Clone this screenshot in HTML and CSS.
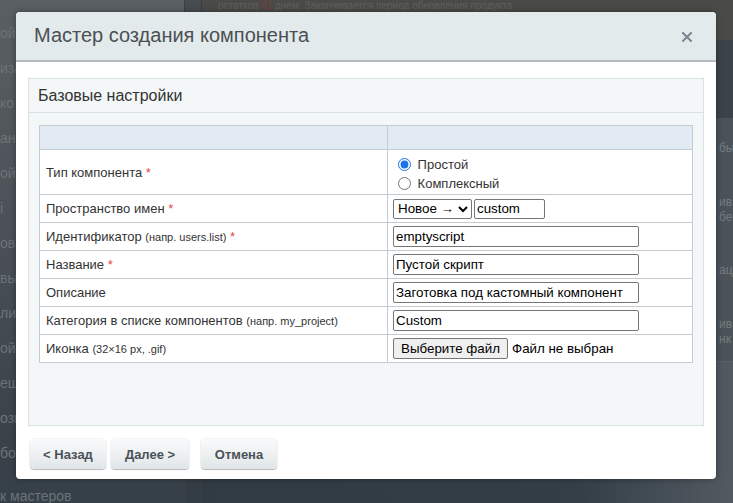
FILE: index.html
```html
<!DOCTYPE html>
<html lang="ru">
<head>
<meta charset="utf-8">
<title>Мастер создания компонента</title>
<link rel="stylesheet" href="styles.css">
</head>
<body>
<div class="page">
  <aside class="sidebar">
    <div class="nav-item">ой</div>
    <div class="nav-item">иза</div>
    <div class="nav-item">ко Т</div>
    <div class="nav-item">анны</div>
    <div class="nav-item">ой</div>
    <div class="nav-item">і</div>
    <div class="nav-item">овы</div>
    <div class="nav-item">вы</div>
    <div class="nav-item">ли</div>
    <div class="nav-item">ой</div>
    <div class="nav-item">еш</div>
    <div class="nav-item">ози</div>
    <div class="nav-item">бот</div>
    <div class="nav-item last">к мастеров</div>
  </aside>
  <div class="divider"></div>
  <main class="main">
    <div class="topbar">
      <p class="topline">остатков <span class="red">61</span> днем. Заканчивается период обновления продукта</p>
    </div>
    <div class="toolbar"></div>
    <div class="grid">
      <div class="grid-row">бы</div>
      <div class="grid-row">ив<br>бе</div>
      <div class="grid-row">ац</div>
      <div class="grid-row">ив<br>нк</div>
    </div>
    <div class="bottom"></div>
  </main>
</div>

<div class="dialog">
  <div class="dialog-head">
    <span class="dialog-title">Мастер создания компонента</span>
    <span class="close">
      <svg width="10" height="10" viewBox="0 0 10 10"><path d="M1 1 L9 9 M9 1 L1 9" stroke="#7b8790" stroke-width="2" stroke-linecap="square" fill="none"/></svg>
    </span>
  </div>
  <div class="dialog-body">
    <div class="panel">
      <div class="panel-title">Базовые настройки</div>
      <div class="panel-content">
        <table class="form">
          <tr class="head-row"><td class="col-label"></td><td></td></tr>
          <tr class="tall-row">
            <td class="col-label">Тип компонента <span class="req">*</span></td>
            <td class="radio-cell">
              <label class="radio"><input type="radio" name="type" checked> Простой</label>
              <label class="radio"><input type="radio" name="type"> Комплексный</label>
            </td>
          </tr>
          <tr>
            <td class="col-label">Пространство имен <span class="req">*</span></td>
            <td class="ns-cell">
              <select class="ns-select"><option>Новое →</option></select><input class="text small-input" type="text" value="custom">
            </td>
          </tr>
          <tr>
            <td class="col-label">Идентификатор <span class="hint">(напр. users.list)</span> <span class="req">*</span></td>
            <td><input class="text" type="text" value="emptyscript"></td>
          </tr>
          <tr>
            <td class="col-label">Название <span class="req">*</span></td>
            <td><input class="text" type="text" value="Пустой скрипт"></td>
          </tr>
          <tr>
            <td class="col-label">Описание</td>
            <td><input class="text" type="text" value="Заготовка под кастомный компонент"></td>
          </tr>
          <tr>
            <td class="col-label">Категория в списке компонентов <span class="hint">(напр. my_project)</span></td>
            <td><input class="text" type="text" value="Custom"></td>
          </tr>
          <tr>
            <td class="col-label">Иконка <span class="hint">(32×16 px, .gif)</span></td>
            <td><span class="file"><button class="file-btn" type="button">Выберите файл</button><span class="file-name">Файл не выбран</span></span></td>
          </tr>
        </table>
      </div>
    </div>
    <div class="buttons">
      <button class="btn btn-back" type="button">&lt; Назад</button>
      <button class="btn btn-next" type="button">Далее &gt;</button>
      <button class="btn btn-cancel" type="button">Отмена</button>
    </div>
  </div>
</div>
</body>
</html>
```

FILE: styles.css
```css
* { box-sizing: border-box; }

html, body {
  margin: 0;
  padding: 0;
}

body {
  width: 733px;
  height: 503px;
  overflow: hidden;
  position: relative;
  font-family: "Liberation Sans", Arial, sans-serif;
  background: #3c454c;
}

/* ---------- dimmed background page ---------- */
.page {
  display: flex;
  height: 503px;
}

.sidebar {
  width: 184px;
  flex: none;
  padding-top: 16px;
  background: linear-gradient(to bottom, #5a5f63 0%, #4b5157 45%, #3b434a 85%, #364048 100%);
  color: #6c7378;
  font-size: 14px;
}

.nav-item {
  height: 35px;
  line-height: 35px;
  white-space: nowrap;
  overflow: hidden;
}

.nav-item.last {
  margin-top: 8px;
}

.divider {
  width: 18px;
  flex: none;
  background: linear-gradient(to bottom, #474c50, #343d44);
  border-left: 1px solid #3a4045;
  border-right: 1px solid #3a4045;
}

.main {
  flex: 1;
  display: flex;
  flex-direction: column;
  min-width: 0;
}

.topbar {
  height: 40px;
  background: #4a4b49;
  padding: 0 0 0 16px;
  overflow: hidden;
}

.topline {
  margin: 0;
  font-size: 10px;
  line-height: 11px;
  color: #5f605d;
  white-space: nowrap;
}

.topline .red { color: #7a3c35; }

.toolbar {
  height: 78px;
  background: #3b4349;
}

.grid {
  height: 244px;
  background: #4b5359;
  border-bottom: 1px solid #5a6268;
}

.grid-row {
  height: 61px;
  display: flex;
  flex-direction: column;
  justify-content: center;
  padding-left: 517px;
  font-size: 12px;
  line-height: 15px;
  color: #737b80;
  white-space: nowrap;
  overflow: hidden;
}

.bottom {
  flex: 1;
  background: linear-gradient(to right, #313b43 0%, #333e47 70%, #525a61 100%);
}

/* ---------- dialog ---------- */
.dialog {
  position: absolute;
  left: 16px;
  top: 12px;
  width: 700px;
  height: 467px;
  background: #fff;
  border-radius: 4px;
  box-shadow: 0 0 6px rgba(0, 0, 0, 0.35);
  display: flex;
  flex-direction: column;
  overflow: hidden;
}

.dialog-head {
  height: 50px;
  flex: none;
  background: #e3eaec;
  border-bottom: 2px solid #b5bcbf;
  display: flex;
  align-items: center;
  justify-content: space-between;
  padding: 0 24px 2px 18px;
}

.dialog-title {
  font-size: 20px;
  color: #4b5053;
}

.close {
  display: flex;
  width: 10px;
  height: 10px;
  margin-top: 4px;
}

.dialog-body {
  flex: 1;
  display: flex;
  flex-direction: column;
  padding: 16px 12px 10px 12px;
}

.panel {
  flex: 1;
  background: #f4f7f8;
  border: 1px solid #dae1e4;
  display: flex;
  flex-direction: column;
}

.panel-title {
  height: 34px;
  flex: none;
  border-bottom: 1px solid #dae1e4;
  padding: 0 9px;
  display: flex;
  align-items: center;
  font-size: 16px;
  color: #333;
}

.panel-content {
  padding: 12px 10px;
}

/* ---------- form table ---------- */
.form {
  width: 654px;
  border-collapse: collapse;
  font-size: 13px;
  color: #333;
  background: #fff;
}

.form td {
  border: 1px solid #c3ccd2;
  height: 28px;
  padding: 0 5px;
  vertical-align: middle;
}

.form td.col-label {
  width: 348px;
  padding-left: 6px;
}

.head-row td {
  height: 24px;
  background: #e2eaf3;
}

.tall-row td {
  height: 45px;
}

.form td.radio-cell {
  padding-top: 4px;
}

.req {
  color: #e04a4a;
}

.hint {
  font-size: 11px;
}

.radio {
  display: flex;
  align-items: center;
  height: 19px;
  white-space: pre;
}

.radio input {
  width: 13px;
  height: 13px;
  margin: 0 3px 0 5px;
  accent-color: #1a73e8;
}

.ns-cell {
  white-space: nowrap;
}

.text {
  width: 246px;
  height: 21px;
  border: 1px solid #767676;
  border-radius: 2px;
  padding: 1px 2px;
  font: 13.33px "Liberation Sans", Arial, sans-serif;
  color: #000;
  background: #fff;
  vertical-align: middle;
}

.ns-select {
  width: 79px;
  height: 20px;
  border: 1px solid #767676;
  border-radius: 2px;
  font: 13.33px "Liberation Sans", Arial, sans-serif;
  color: #000;
  background: #fff;
  vertical-align: middle;
  margin: 0 2px 0 0;
  padding: 0;
}

.text.small-input {
  width: 71px;
  height: 20px;
}

.file {
  display: flex;
  align-items: center;
}

.file-btn {
  width: 115px;
  height: 21px;
  border: 1px solid #767676;
  border-radius: 2px;
  background: #efefef;
  font: 13.33px "Liberation Sans", Arial, sans-serif;
  color: #000;
  padding: 0;
}

.file-name {
  margin-left: 4px;
  font-size: 13.33px;
  color: #000;
}

/* ---------- buttons ---------- */
.buttons {
  display: flex;
  gap: 5px;
  margin-top: 13px;
  padding-left: 2px;
}

.btn {
  height: 30px;
  padding: 0;
  border: none;
  border-radius: 4px;
  background: linear-gradient(to bottom, #f8f9fa 0%, #eef1f2 50%, #dfe5e7 100%);
  box-shadow: 0 1px 1px rgba(0, 0, 0, 0.25), 0 0 0 1px rgba(0, 0, 0, 0.04);
  font: bold 13px "Liberation Sans", Arial, sans-serif;
  color: #4b5257;
  text-align: center;
}

.btn-back { width: 76px; }
.btn-next { width: 78px; }

.btn-cancel {
  width: 76px;
  margin-left: 7px;
}
```
